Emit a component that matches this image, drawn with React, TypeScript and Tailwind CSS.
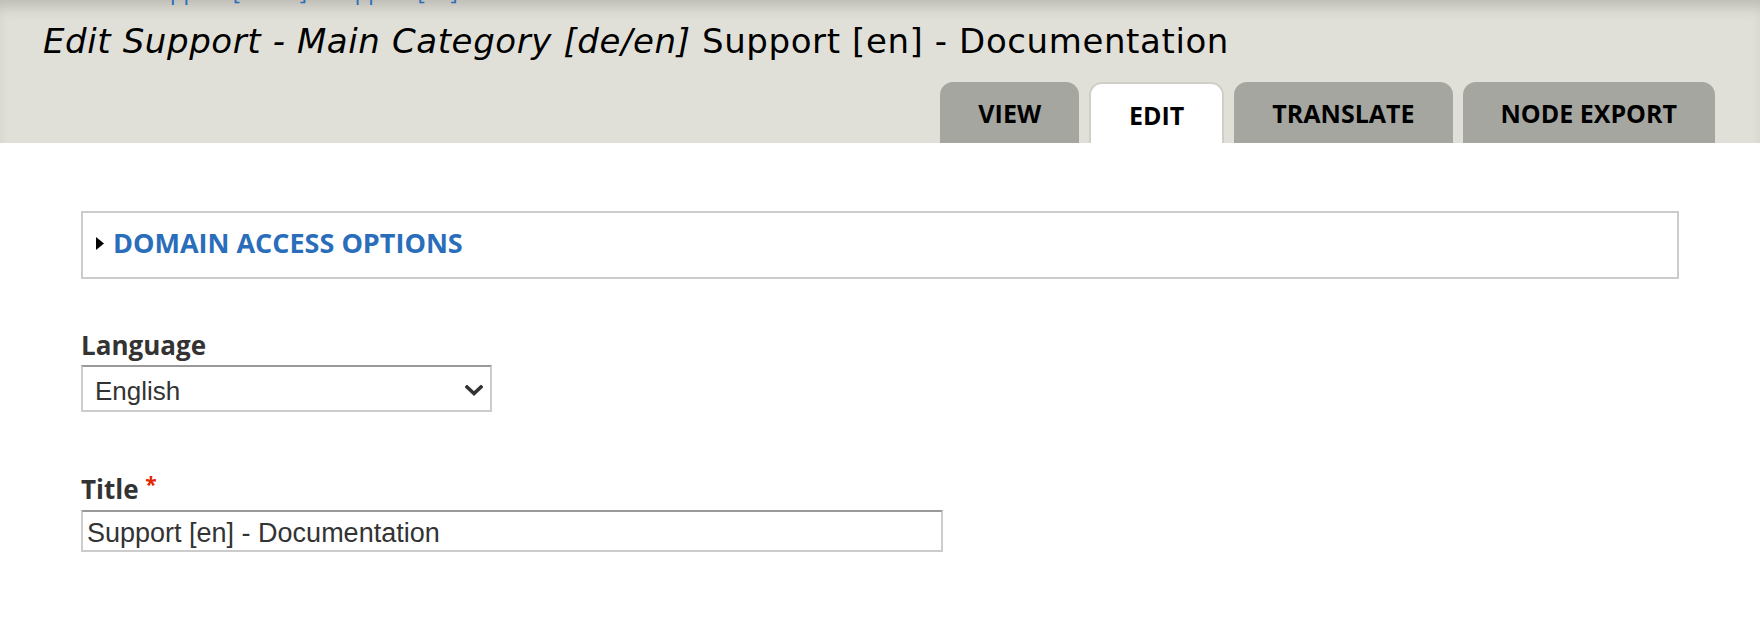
import React from "react";

const tabs = [
  { label: "View", active: false },
  { label: "Edit", active: true },
  { label: "Translate", active: false },
  { label: "Node export", active: false },
];

function Chevron() {
  return (
    <svg width="18" height="11" viewBox="0 0 18 11" className="pointer-events-none absolute right-[9px] top-[20px]">
      <path d="M2 2 L9 8.5 L16 2" fill="none" stroke="#333" strokeWidth="3.6" strokeLinecap="square" />
    </svg>
  );
}

export default function App() {
  const ui = { fontFamily: '"Open Sans", "DejaVu Sans", sans-serif' };
  const field = { fontFamily: '"Liberation Sans", Arial, sans-serif' };

  return (
    <div className="min-h-[634px] bg-white text-[#333]" style={ui}>
      <header className="flex h-[143px] flex-col overflow-hidden bg-[#e0e0d8] px-[43px] shadow-[inset_0_14px_16px_-8px_rgba(0,0,0,0.18)]">
        <div className="-mt-[21px] h-[24px] pl-[17px] text-[22px] leading-[24px] text-[#2a6ebb]">
          Home » Support [de/en] » Support [en]
        </div>
        <h1
          className="mt-[18px] whitespace-nowrap text-[34px] font-normal leading-[40px] tracking-[0.6px] text-black"
          style={{ fontFamily: '"DejaVu Sans", sans-serif' }}
        >
          <em>Edit Support - Main Category [de/en]</em> Support [en] - Documentation
        </h1>
        <ul className="mt-auto flex justify-end gap-[10px] pr-[2px]">
          {tabs.map((t) => (
            <li
              key={t.label}
              className={`h-[61px] rounded-t-[13px] px-[38px] pt-[14px] text-[25px] font-bold uppercase leading-[34px] text-black ${
                t.active ? "border-2 border-b-0 border-[#cfcfc8] bg-white px-[36px] pt-[12px]" : "bg-[#a6a6a0]"
              }`}
            >
              {t.label}
            </li>
          ))}
        </ul>
      </header>

      <main className="px-[81px] pt-[68px]">
        <div className="flex h-[68px] items-start gap-[9px] border-2 border-[#ccc] pl-[13px] pt-[12px]">
          <svg width="8" height="13" viewBox="0 0 8 13" className="mt-[12px]">
            <polygon points="0,0 8,6.5 0,13" fill="#000" />
          </svg>
          <span className="text-[27px] font-bold uppercase leading-[36px] text-[#2a6ebb]">Domain access options</span>
        </div>

        <div className="mt-[48px]">
          <label className="block text-[26px] font-bold leading-[36px] text-[#333]">Language</label>
          <div className="relative mt-[2px] w-[411px]">
            <select
              className="h-[47px] w-full appearance-none border-2 border-[#ccc] border-t-[#999] bg-white pl-[12px] pt-[5px] text-[26px] text-[#333] outline-none"
              style={field}
              defaultValue="en"
            >
              <option value="en">English</option>
              <option value="de">German</option>
            </select>
            <Chevron />
          </div>
        </div>

        <div className="mt-[59px]">
          <label className="block text-[26px] font-bold leading-[36px] text-[#333]">
            Title <span className="align-top text-[21px] font-bold leading-[26px] text-[#e32700]">*</span>
          </label>
          <input
            className="mt-[3px] block h-[42px] w-[862px] border-2 border-[#ccc] border-t-[#999] bg-white pb-[2px] pl-[4px] pt-[6px] text-[27px] leading-[30px] text-[#333] outline-none"
            style={field}
            defaultValue="Support [en] - Documentation"
          />
        </div>
      </main>
    </div>
  );
}
